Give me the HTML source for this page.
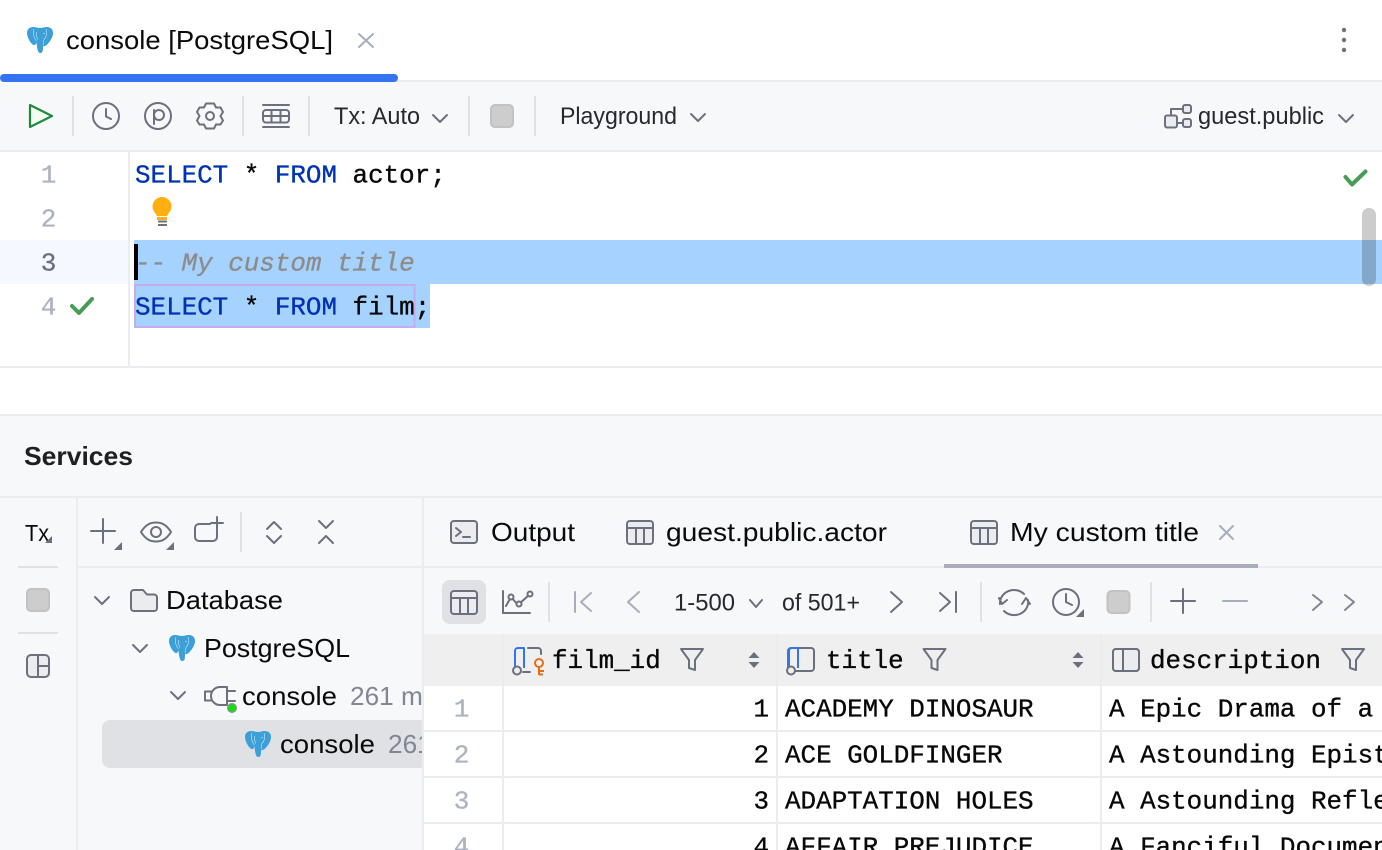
<!DOCTYPE html>
<html><head><meta charset="utf-8"><style>
html,body{margin:0;padding:0;width:1382px;height:850px;overflow:hidden;background:#fff}
svg{display:block}
.s{font-family:"Liberation Sans",sans-serif;font-size:26px;fill:#0a0a0a}
.t{font-family:"Liberation Sans",sans-serif;font-size:24.5px;fill:#27282e}
.g{fill:#818594}
.m{font-family:"Liberation Mono",monospace;font-size:25.9px;fill:#080808;stroke:#080808;stroke-width:.35}
.k{fill:#0033b3;stroke:#0033b3}
.n{font-family:"Liberation Mono",monospace;font-size:26px;fill:#aeb3c2;stroke:#aeb3c2;stroke-width:.3;text-anchor:middle}
.i{fill:none;stroke:#6c707e;stroke-width:2;stroke-linecap:round;stroke-linejoin:round}
.l{fill:none;stroke:#a8adbd;stroke-width:2;stroke-linecap:round;stroke-linejoin:round}
.f{fill:#ebecf0;stroke:#6c707e;stroke-width:2;stroke-linejoin:round}
</style></head><body>
<svg width="1382" height="850" viewBox="0 0 1382 850" xmlns="http://www.w3.org/2000/svg">
<defs>
<g id="el">
<path fill="#3d9fd8" d="M6.500 0C2.500 0 0 2 0 6C0 10 3 16 6.500 18C8 18.800 9 17 9.300 15C9.800 18 10 21 10.800 23.500C11.500 26.800 15 26.800 15.700 24L16.200 19C18.500 19.300 20 18 21 16.500C23.800 13.500 26 9.500 26 6C26 2 23.500 0 19.500 0C17.500 0 15.500 1 13 1C10.500 1 8.500 0 6.500 0Z"/>
<path fill="none" stroke="#cfe7f6" stroke-width=".6" d="M7 2C5.500 6 6.500 10 9.300 14M19 2C20.500 6 19.500 10 17 12.500C16.200 13.500 16.200 15 16.200 18M9.500 5C8.800 8 9.800 10 10.800 12.500M16 6L18 7"/>
</g>
<g id="grid"><rect x="1" y="1" width="26" height="23" rx="3" class="f"/><path class="i" d="M1 8H27M10 8V24M18 8V24"/></g>
<g id="stop"><rect x="1" y="1" width="22" height="22" rx="4" fill="#cdcdcd" stroke="#c2c2c2" stroke-width="2"/></g>
<g id="funnel"><path class="i" d="M1 1H23L15 12V22L9 20V12Z"/></g>
<g id="sort"><path fill="#6c707e" d="M0 6L5.500 0L11 6ZM0 10L5.500 16L11 10Z"/></g>
<clipPath id="treeclip"><rect x="78" y="568" width="344" height="282"/></clipPath>
</defs>

<!-- backgrounds -->
<rect width="1382" height="850" fill="#fff"/>
<rect y="80" width="1382" height="2" fill="#ebecf0"/>
<rect y="82" width="1382" height="68" fill="#f7f8fa"/>
<rect y="150" width="1382" height="2" fill="#ebecf0"/>
<rect y="366" width="1382" height="2" fill="#ebecf0"/>
<rect y="414" width="1382" height="2" fill="#ebecf0"/>
<rect y="416" width="1382" height="434" fill="#f7f8fa"/>
<rect y="496" width="1382" height="2" fill="#ebecf0"/>
<rect x="76" y="498" width="2" height="352" fill="#ebecf0"/>
<rect x="422" y="498" width="2" height="352" fill="#ebecf0"/>
<rect x="78" y="566" width="344" height="2" fill="#ebecf0"/>
<rect x="424" y="566" width="958" height="2" fill="#ebecf0"/>

<!-- top tab -->
<use href="#el" x="27" y="27"/>
<text class="s" x="66" y="49" textLength="267" lengthAdjust="spacingAndGlyphs">console [PostgreSQL]</text>
<path class="l" d="M359 34L373 47M373 34L359 47"/>
<rect x="0" y="74" width="398" height="8" rx="4" fill="#3574f0"/>
<circle cx="1344" cy="30" r="2.200" fill="#6c707e"/><circle cx="1344" cy="40" r="2.200" fill="#6c707e"/><circle cx="1344" cy="50" r="2.200" fill="#6c707e"/>

<!-- editor toolbar -->
<path d="M30 105L52 116L30 127Z" fill="#f2fcf3" stroke="#208a3c" stroke-width="2.200" stroke-linejoin="round"/>
<g fill="#dfe1e5"><rect x="72" y="96" width="2" height="40"/><rect x="242" y="96" width="2" height="40"/><rect x="308" y="96" width="2" height="40"/><rect x="468" y="96" width="2" height="40"/><rect x="534" y="96" width="2" height="40"/></g>
<circle class="i" cx="106" cy="116" r="13"/><path class="i" d="M106 109V116.500L111 119"/>
<circle class="i" cx="158" cy="116" r="13"/><path class="i" d="M154 110V124"/><circle class="i" cx="159" cy="115" r="5"/>
<path class="i" d="M206 103.500H214L216 107.500L220.500 107.500L223 112L220.500 116L223 120.500L220.500 124.500H216L214 128.500H206L204 124.500H199.500L197 120.500L199.500 116L197 112L199.500 107.500H204Z"/>
<circle class="i" cx="210" cy="116" r="4"/>
<path class="i" d="M263 105H289M263 127H289"/>
<rect class="i" x="263" y="110" width="26" height="12.500" rx="3"/><path class="i" d="M263 116H289M271.500 110V122M280.500 110V122"/>
<text class="t" x="334" y="124" textLength="86" lengthAdjust="spacingAndGlyphs">Tx: Auto</text>
<path class="i" d="M433 115L440 122L447 115"/>
<use href="#stop" x="490" y="104"/>
<text class="t" x="560" y="124" textLength="117" lengthAdjust="spacingAndGlyphs">Playground</text>
<path class="i" d="M691 114L698 121L705 114"/>
<rect class="f" x="1165" y="115.500" width="12" height="12" rx="2"/>
<rect class="f" x="1183" y="105" width="8" height="8" rx="2"/>
<rect class="f" x="1183" y="119" width="8" height="8" rx="2"/>
<path class="i" d="M1171 115V109H1183M1177 123H1183"/>
<text class="t" x="1198" y="124" textLength="126" lengthAdjust="spacingAndGlyphs">guest.public</text>
<path class="i" d="M1339 115L1346 122L1353 115"/>

<!-- editor -->
<rect x="128" y="152" width="2" height="214" fill="#ebecf0"/>
<rect x="0" y="240" width="128" height="44" fill="#f5f8fe"/>
<rect x="134" y="240" width="1248" height="44" fill="#a6d2ff"/>
<rect x="134" y="284" width="296" height="44" fill="#a6d2ff"/>
<rect x="135" y="285" width="279.500" height="42" fill="none" stroke="#c7abef" stroke-width="2"/>
<rect x="134" y="244" width="4" height="36" fill="#000"/>
<text class="n" x="48.500" y="182.500">1</text>
<text class="n" x="48.500" y="226.500">2</text>
<text class="n" x="48.500" y="270.500" style="fill:#6c707e;stroke:#6c707e">3</text>
<text class="n" x="48.500" y="314.500">4</text>
<path d="M72 306L79 313L92 299" fill="none" stroke="#499c54" stroke-width="4" stroke-linejoin="round" stroke-linecap="round"/>
<text class="m" x="135" y="182.500" xml:space="preserve"><tspan class="k">SELECT</tspan> * <tspan class="k">FROM</tspan> actor;</text>
<text class="m" x="135" y="270.500" style="font-style:italic;fill:#8c8c8c;stroke:#8c8c8c">-- My custom title</text>
<text class="m" x="135" y="314.500" xml:space="preserve"><tspan class="k">SELECT</tspan> * <tspan class="k">FROM</tspan> film;</text>
<path d="M157 216C155 212 152.500 211 152.500 206.500A9.500 9.500 0 0 1 171.500 206.500C171.500 211 169 212 167 216Z" fill="#ffaf0f"/>
<rect x="157" y="217" width="10" height="3" fill="#ffaf0f"/>
<rect x="158" y="220.500" width="9" height="2" fill="#6c707e"/><rect x="158" y="224" width="9" height="2" fill="#6c707e"/>
<path d="M1345.500 177L1352 184.500L1365.500 171.500" fill="none" stroke="#499c54" stroke-width="4" stroke-linejoin="round" stroke-linecap="round"/>
<rect x="1362" y="208" width="14" height="78" rx="7" fill="#000" fill-opacity=".2"/>

<!-- services -->
<text class="s" x="24" y="465" textLength="109" lengthAdjust="spacingAndGlyphs" style="font-weight:700;fill:#1e1f22">Services</text>

<!-- left strip -->
<text class="t" x="25" y="541" textLength="24" lengthAdjust="spacingAndGlyphs" style="fill:#0a0a0a;font-size:23px">Tx</text>
<path d="M52 536V543H45Z" fill="#6c707e"/>
<rect x="18" y="566" width="40" height="2" fill="#dfe1e5"/>
<use href="#stop" x="26" y="588"/>
<rect x="18" y="632" width="40" height="2" fill="#dfe1e5"/>
<rect class="f" x="27" y="655" width="22" height="22" rx="4"/><path class="i" d="M38 655V677M38 666H49"/>

<!-- tree toolbar -->
<path class="i" d="M91 531H115M103 519V543"/><path d="M122 542V550H114Z" fill="#6c707e"/>
<path class="i" d="M141 532C146 524 151 522.500 156 522.500C161 522.500 166 524 171 532C166 540 161 541.500 156 541.500C151 541.500 146 540 141 532Z"/>
<circle class="i" cx="156" cy="532" r="5"/><path d="M174 542V550H166Z" fill="#6c707e"/>
<path class="i" d="M210 524H199A4 4 0 0 0 195 528V537A4 4 0 0 0 199 541H213A4 4 0 0 0 217 537V530M217 517V529M211 523H223"/>
<rect x="240" y="512" width="2" height="40" fill="#dfe1e5"/>
<path class="i" d="M267 529L274 522L281 529M267 536L274 543L281 536"/>
<path class="i" d="M319 521L326 528L333 521M319 543L326 536L333 543"/>

<!-- tree -->
<path class="i" d="M95 597L102 604L109 597"/>
<path class="f" d="M131 593A3 3 0 0 1 134 590H143L147 594.500H154A3 3 0 0 1 157 597.500V608A3 3 0 0 1 154 611H134A3 3 0 0 1 131 608Z"/>
<text class="s" x="166" y="609" textLength="117" lengthAdjust="spacingAndGlyphs">Database</text>
<path class="i" d="M133 645L140 652L147 645"/>
<use href="#el" x="169" y="635"/>
<text class="s" x="204" y="657" textLength="146" lengthAdjust="spacingAndGlyphs">PostgreSQL</text>
<path class="i" d="M171 692L178 699L185 692"/>
<path class="i" d="M227 687H220A9 9 0 0 0 220 705H227ZM227 691H235M227 701H235M211 691.500H205V700.500H211"/>
<circle cx="232" cy="708" r="5" fill="#8f8f8f"/><circle cx="232" cy="708" r="3.800" fill="#0fe00f"/>
<text class="s" x="242" y="705" textLength="95" lengthAdjust="spacingAndGlyphs">console</text>
<rect x="102" y="720" width="340" height="48" rx="8" fill="#dfe1e5" clip-path="url(#treeclip)"/>
<use href="#el" x="245" y="731"/>
<text class="s" x="280" y="753" textLength="95" lengthAdjust="spacingAndGlyphs">console</text>
<g clip-path="url(#treeclip)">
<text class="s g" x="350" y="705" textLength="86" lengthAdjust="spacingAndGlyphs">261 ms</text>
<text class="s g" x="388" y="753" textLength="86" lengthAdjust="spacingAndGlyphs">261 ms</text>
</g>

<!-- result tabs -->
<rect class="f" x="451" y="521" width="26" height="22" rx="3"/><path class="i" d="M456 528L461 532L456 536M463 537H470"/>
<text class="s" x="491" y="541" textLength="84" lengthAdjust="spacingAndGlyphs">Output</text>
<use href="#grid" x="626" y="520"/>
<text class="s" x="666" y="541" textLength="221" lengthAdjust="spacingAndGlyphs">guest.public.actor</text>
<use href="#grid" x="970" y="520"/>
<text class="s" x="1010" y="541" textLength="189" lengthAdjust="spacingAndGlyphs">My custom title</text>
<path class="l" d="M1220 526L1233 539M1233 526L1220 539"/>
<rect x="944" y="564" width="314" height="4" fill="#a8adbd"/>

<!-- data toolbar -->
<rect x="442" y="580" width="44" height="44" rx="8" fill="#dfe1e5"/>
<use href="#grid" x="450" y="590"/>
<path class="i" d="M503 591V613H530M506 606L511 597L518 605L530 594"/>
<circle cx="511" cy="597" r="2.500" fill="#f7f8fa" stroke="#6c707e" stroke-width="2"/><circle cx="519" cy="604" r="2.500" fill="#f7f8fa" stroke="#6c707e" stroke-width="2"/><circle cx="530" cy="594" r="2.500" fill="#f7f8fa" stroke="#6c707e" stroke-width="2"/>
<rect x="548" y="582" width="2" height="40" fill="#dfe1e5"/>
<path class="l" d="M575 592V612M591 593L581 602L591 611"/>
<path class="l" d="M639 592L628 602L639 612"/>
<text class="t" x="674" y="610.500" textLength="61" lengthAdjust="spacingAndGlyphs">1-500</text>
<path class="i" d="M750 600L756 607L762 600"/>
<text class="t" x="782" y="610.500" textLength="78" lengthAdjust="spacingAndGlyphs">of 501+</text>
<path class="i" d="M891 592L902 602L891 612"/>
<path class="i" d="M940 593L950 602L940 611M956 592V612"/>
<rect x="980" y="582" width="2" height="40" fill="#dfe1e5"/>
<path class="i" d="M1000 604A14 13 0 0 1 1024 594M1028 600A14 13 0 0 1 1004 611M999 598L1002 604L1007 600M1022 604L1026 598L1030 604"/>
<circle class="i" cx="1066" cy="602" r="13"/><path class="i" d="M1066 594V602L1072 605"/><path d="M1084 609V617H1076Z" fill="#6c707e"/>
<use href="#stop" x="1106.500" y="590"/>
<rect x="1150" y="582" width="2" height="40" fill="#dfe1e5"/>
<path class="i" d="M1171 601H1195M1183 589V613"/>
<path class="l" d="M1223 601H1247"/>
<path class="i" d="M1313 595L1322 602L1313 610" style="stroke:#818594"/>
<path class="i" d="M1345 595L1354 602L1345 610" style="stroke:#818594"/>

<!-- table -->
<rect x="424" y="634" width="958" height="52" fill="#efefef"/>
<rect x="424" y="686" width="958" height="164" fill="#fff"/>
<g fill="#ebecf0">
<rect x="424" y="730" width="958" height="2"/><rect x="424" y="776" width="958" height="2"/><rect x="424" y="822" width="958" height="2"/>
<rect x="502" y="634" width="2" height="216"/><rect x="776" y="634" width="2" height="216"/><rect x="1100" y="634" width="2" height="216"/>
</g>
<!-- header icons -->
<path class="i" d="M528 648H538A3 3 0 0 1 541 651V654M530 672H523" />
<path d="M515 667V651A3 3 0 0 1 518 648H524V668" fill="none" stroke="#3574f0" stroke-width="2" stroke-linejoin="round"/>
<circle cx="517" cy="670.500" r="4" fill="#efefef" stroke="#6c707e" stroke-width="2"/>
<circle cx="539" cy="663" r="4" fill="none" stroke="#e66d17" stroke-width="2"/><path d="M539 667V675M539 671H544M539 674.500H543" fill="none" stroke="#e66d17" stroke-width="2"/>
<text class="m" x="552" y="668">film_id</text>
<use href="#funnel" x="680" y="648"/>
<use href="#sort" x="748.500" y="652"/>
<rect class="i" x="788" y="648" width="26" height="23" rx="3"/>
<path d="M789 667V651A3 3 0 0 1 792 648H798V668" fill="none" stroke="#3574f0" stroke-width="2" stroke-linejoin="round"/>
<circle cx="791" cy="670.500" r="4" fill="#efefef" stroke="#6c707e" stroke-width="2"/>
<text class="m" x="826" y="668">title</text>
<use href="#funnel" x="922.500" y="648"/>
<use href="#sort" x="1072.500" y="652"/>
<rect class="f" x="1113" y="649" width="26" height="22" rx="3"/><rect x="1114" y="650" width="9" height="20" fill="#efefef"/><path class="i" d="M1123 649V671"/><rect class="i" x="1113" y="649" width="26" height="22" rx="3"/>
<text class="m" x="1150" y="668">description</text>
<use href="#funnel" x="1341" y="648"/>
<!-- rows -->
<text class="n" x="461.500" y="716.500">1</text><text class="n" x="461.500" y="762.500">2</text><text class="n" x="461.500" y="808.500">3</text><text class="n" x="461.500" y="854.500">4</text>
<g style="text-anchor:end"><text class="m" x="769" y="716.500">1</text><text class="m" x="769" y="762.500">2</text><text class="m" x="769" y="808.500">3</text><text class="m" x="769" y="854.500">4</text></g>
<text class="m" x="785" y="716.500">ACADEMY DINOSAUR</text>
<text class="m" x="785" y="762.500">ACE GOLDFINGER</text>
<text class="m" x="785" y="808.500">ADAPTATION HOLES</text>
<text class="m" x="785" y="854.500">AFFAIR PREJUDICE</text>
<text class="m" x="1109" y="716.500">A Epic Drama of a</text>
<text class="m" x="1109" y="762.500">A Astounding Epistle</text>
<text class="m" x="1109" y="808.500">A Astounding Reflection</text>
<text class="m" x="1109" y="854.500">A Fanciful Documentary</text>
</svg>
</body></html>
